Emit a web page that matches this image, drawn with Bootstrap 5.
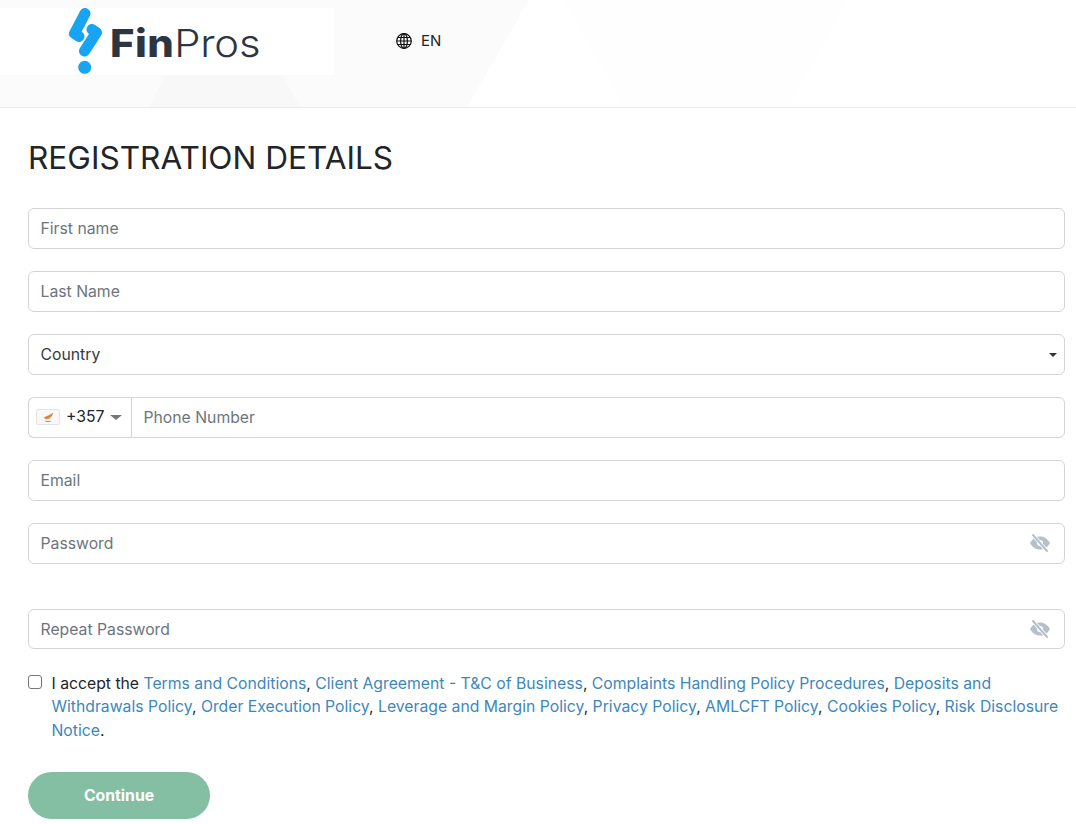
<!DOCTYPE html>
<html lang="en">
<head>
<meta charset="utf-8">
<title>FinPros Registration</title>
<link href="https://cdn.jsdelivr.net/npm/bootstrap@5.3.0/dist/css/bootstrap.min.css" rel="stylesheet">
<style>
html,body{overflow:hidden;height:824px}
body{font-family:Inter,"Liberation Sans",sans-serif;font-size:15.75px;color:#212529;background:#fff}
.top-strip{height:108px;border-bottom:1px solid #e9ecef;position:relative;overflow:hidden;background:#fff}
.top-shapes{position:absolute;inset:0;width:100%;height:100%}
.top-inner{position:relative;height:107px;align-items:flex-start}
.logo-box{width:334px;height:67px;margin-top:8px;background:#fff;position:relative}
.logo-mark{position:absolute;left:68px;top:0;width:36px;height:68px}
.logo-word{position:absolute;left:110px;top:13px;font-family:Inter,sans-serif;font-size:38px;line-height:44px;color:#2d3640;white-space:nowrap;transform:scaleX(1.1);transform-origin:left center}
.logo-word b{font-weight:800;letter-spacing:.4px}
.logo-word span{font-weight:300;letter-spacing:-.2px}
.lang-pick{margin-left:62px;margin-top:33px;font-size:15px;line-height:16px;gap:9px;color:#212529}
.form-wrap{padding:0 11px 0 28px}
.page-title{font-size:31.6px;font-weight:400;line-height:38px;margin:31px 0 31px;color:#212529}
.field-gap{margin-bottom:22px}
.form-control,.form-select,.phone-code{height:41px;font-size:15.75px;border-color:#d4d4d4;border-radius:6px;padding:5.500px 11.500px 6.500px;color:#212529}
.form-control::placeholder{color:#6c757d;opacity:1}
.form-select{background-image:none;color:#343a40;padding-top:6px;padding-bottom:6px}
.select-wrap{position:relative}
.select-caret{position:absolute;right:8px;top:19px;width:0;height:0;border-left:4px solid transparent;border-right:4px solid transparent;border-top:4px solid #333}
.phone-code{width:103px;padding:0 0 1px 7px;gap:6px;background:#fff;border:1px solid #d4d4d4;border-right:0;border-radius:6px 0 0 6px;flex:none}
.phone-code svg.flag{border:1px solid #e4e4e4;border-radius:2px;background:#f8f8f8}
.code-caret{width:0;height:0;border-left:6px solid transparent;border-right:6px solid transparent;border-top:5px solid #777}
.eye-wrap{position:relative}
.eye-wrap .form-control{padding-right:44px}
.eye-icon{position:absolute;right:14px;top:10px;width:22px;height:20px}
.pw-gap{margin-bottom:45px}
.form-control.pw-second{height:40px;padding-top:6.500px;padding-bottom:5.500px}
.accept-row{margin:23px 0 30px;line-height:23.4px;padding-left:23.500px;min-height:0}
.accept-row .form-check-input{margin:3px 0 0 -23.500px;width:14px;height:14px;border-color:#767676;border-radius:3px}
.accept-row a{color:#3d87bd;text-decoration:none}
.btn-continue{width:182px;height:47px;border-radius:24px;background:#84bea3;border:0;color:#fff;font-weight:700;font-size:15.75px;padding:0}
.btn-continue:hover{background:#84bea3;color:#fff}
</style>
</head>
<body>
<header class="top-strip">
  <svg class="top-shapes" viewBox="0 0 1076 107" preserveAspectRatio="none" aria-hidden="true">
    <polygon points="0,0 529,0 467,107 0,107" fill="#fbfbfb"/>
    <polygon points="150,107 165,75 282,75 300,107" fill="#f8f8f8"/>
    <polygon points="564,0 848,0 788,107 624,107" fill="#fefefe"/>
  </svg>
  <div class="top-inner d-flex">
    <div class="logo-box">
      <svg class="logo-mark" viewBox="0 0 36 68" aria-hidden="true">
        <g fill="none" stroke="#18a4f4" stroke-width="11" stroke-linecap="round" stroke-linejoin="round">
          <path d="M17 5.500 L6.500 25.500 L11 28.500"/>
          <path d="M24 21.500 L28.500 24.500 L16.500 43"/>
        </g>
        <circle cx="16.700" cy="59.300" r="6.500" fill="#18a4f4"/>
      </svg>
      <div class="logo-word"><b>Fin</b><span>Pros</span></div>
    </div>
    <div class="lang-pick d-flex align-items-center">
      <svg width="16" height="16" viewBox="0 0 16 16" fill="none" stroke="#111" stroke-width="1.200" aria-hidden="true">
        <circle cx="8" cy="8" r="7.300"/>
        <ellipse cx="8" cy="8" rx="3.400" ry="7.300"/>
        <path d="M8 .7V15.300M.7 8H15.300M1.700 4.500H14.300M1.700 11.500H14.300"/>
      </svg>
      <span>EN</span>
    </div>
  </div>
</header>
<main class="form-wrap">
  <h1 class="page-title">REGISTRATION DETAILS</h1>
  <form>
    <div class="field-gap"><input class="form-control" type="text" placeholder="First name"></div>
    <div class="field-gap"><input class="form-control" type="text" placeholder="Last Name"></div>
    <div class="field-gap select-wrap">
      <select class="form-select"><option>Country</option></select>
      <span class="select-caret"></span>
    </div>
    <div class="field-gap d-flex">
      <div class="phone-code d-flex align-items-center">
        <svg class="flag" width="24" height="16" viewBox="0 0 24 16" aria-hidden="true">
          <path d="M7 9 C10 6 14 6 18 3 C17 8 13 10.500 10 10.500 Z" fill="#d68a3a"/>
          <path d="M9 12.500 C11 13.500 13 13.500 15 12.500" stroke="#8fa57a" stroke-width="1.200" fill="none"/>
        </svg>
        <span>+357</span>
        <span class="code-caret"></span>
      </div>
      <input class="form-control rounded-start-0" type="tel" placeholder="Phone Number">
    </div>
    <div class="field-gap"><input class="form-control" type="email" placeholder="Email"></div>
    <div class="eye-wrap pw-gap">
      <input class="form-control" type="password" placeholder="Password">
      <svg class="eye-icon" viewBox="0 0 22 20" aria-hidden="true">
        <path d="M1 10 C4 5 7.500 3.500 11 3.500 C14.500 3.500 18 5 21 10 C18 15 14.500 16.500 11 16.500 C7.500 16.500 4 15 1 10 Z" fill="#b6c0cb"/>
        <circle cx="11" cy="10" r="3" fill="#fff"/>
        <path d="M4 2 L18 18" stroke="#fff" stroke-width="3.500"/>
        <path d="M4 2 L18 18" stroke="#b6c0cb" stroke-width="2" stroke-linecap="round"/>
      </svg>
    </div>
    <div class="eye-wrap">
      <input class="form-control pw-second" type="password" placeholder="Repeat Password">
      <svg class="eye-icon" viewBox="0 0 22 20" aria-hidden="true">
        <path d="M1 10 C4 5 7.500 3.500 11 3.500 C14.500 3.500 18 5 21 10 C18 15 14.500 16.500 11 16.500 C7.500 16.500 4 15 1 10 Z" fill="#b6c0cb"/>
        <circle cx="11" cy="10" r="3" fill="#fff"/>
        <path d="M4 2 L18 18" stroke="#fff" stroke-width="3.500"/>
        <path d="M4 2 L18 18" stroke="#b6c0cb" stroke-width="2" stroke-linecap="round"/>
      </svg>
    </div>
    <div class="form-check accept-row">
      <input class="form-check-input" type="checkbox" id="acc">
      <label class="form-check-label" for="acc">I accept the <a href="#">Terms and Conditions</a>, <a href="#">Client Agreement - T&amp;C of Business</a>, <a href="#">Complaints Handling Policy Procedures</a>, <a href="#">Deposits and Withdrawals Policy</a>, <a href="#">Order Execution Policy</a>, <a href="#">Leverage and Margin Policy</a>, <a href="#">Privacy Policy</a>, <a href="#">AMLCFT Policy</a>, <a href="#">Cookies Policy</a>, <a href="#">Risk Disclosure Notice</a>.</label>
    </div>
    <button type="button" class="btn btn-continue">Continue</button>
  </form>
</main>
<script src="https://cdn.jsdelivr.net/npm/bootstrap@5.3.0/dist/js/bootstrap.bundle.min.js"></script>
</body>
</html>
